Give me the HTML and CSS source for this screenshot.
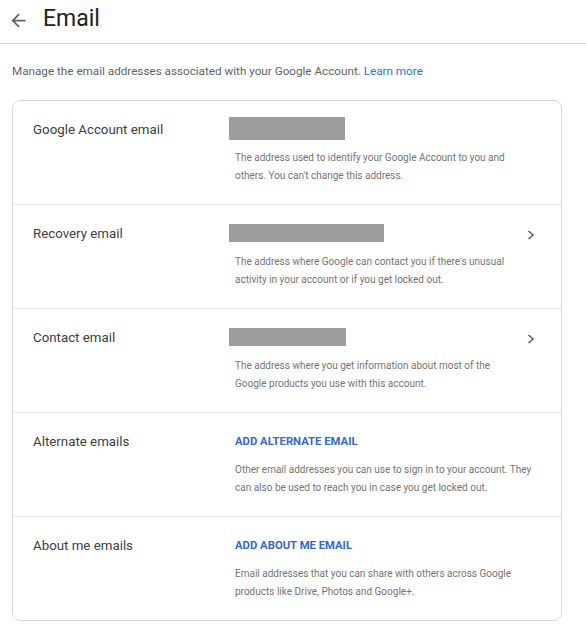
FILE: index.html
```html
<!DOCTYPE html>
<html lang="en">
<head>
<meta charset="utf-8">
<title>Email</title>
<link rel="stylesheet" href="styles.css">
</head>
<body>
<header class="topbar">
  <svg class="back" viewBox="0 0 24 24" width="21" height="21" aria-hidden="true"><path d="M20 11H7.83l5.59-5.59L12 4l-8 8 8 8 1.41-1.41L7.83 13H20v-2z"/></svg>
  <h1 class="title">Email</h1>
</header>
<main class="content">
  <p class="intro">Manage the email addresses associated with your Google Account. <a class="link" href="#">Learn more</a></p>
  <section class="card">
    <div class="row">
      <div class="label">Google Account email</div>
      <div class="line"><span class="redact redact-tall" style="width:116px"></span></div>
      <p class="desc">The address used to identify your Google Account to you and others. You can't change this address.</p>
    </div>
    <div class="row">
      <div class="label">Recovery email</div>
      <div class="line"><span class="redact" style="width:155px"></span></div>
      <div class="action"><svg class="chev" viewBox="0 0 8 10" width="8" height="10" aria-hidden="true"><polyline points="1.5,1 6,5 1.5,9"/></svg></div>
      <p class="desc">The address where Google can contact you if there's unusual activity in your account or if you get locked out.</p>
    </div>
    <div class="row">
      <div class="label">Contact email</div>
      <div class="line"><span class="redact" style="width:117px"></span></div>
      <div class="action"><svg class="chev" viewBox="0 0 8 10" width="8" height="10" aria-hidden="true"><polyline points="1.5,1 6,5 1.5,9"/></svg></div>
      <p class="desc">The address where you get information about most of the<br>Google products you use with this account.</p>
    </div>
    <div class="row">
      <div class="label">Alternate emails</div>
      <div class="line"><a class="add" href="#">ADD ALTERNATE EMAIL</a></div>
      <p class="desc">Other email addresses you can use to sign in to your account. They can also be used to reach you in case you get locked out.</p>
    </div>
    <div class="row">
      <div class="label">About me emails</div>
      <div class="line"><a class="add" href="#">ADD ABOUT ME EMAIL</a></div>
      <p class="desc">Email addresses that you can share with others across Google products like Drive, Photos and Google+.</p>
    </div>
  </section>
</main>
</body>
</html>
```

FILE: styles.css
```css
* { box-sizing: border-box; }
html, body { margin: 0; padding: 0; background: #fff; }
body { font-family: Roboto, "Noto Sans", Arial, sans-serif; color: #3c4043; }

.topbar {
  height: 44px;
  display: flex;
  align-items: center;
  padding-left: 8px;
  border-bottom: 1px solid #dadce0;
}
.back { fill: #5f6368; flex: none; margin-top: -2px; }
.title {
  margin: -6px 0 0 14px;
  font-size: 23px;
  font-weight: 400;
  color: #202124;
  line-height: 30px;
}

.content { padding: 0 0 0 12px; }
.intro {
  margin: 17px 0 19px;
  font-size: 11.7px;
  line-height: 20px;
  color: #5f6368;
}
.link { color: #1a73e8; text-decoration: none; }

.card {
  width: 550px;
  border: 1px solid #dadce0;
  border-radius: 8px;
}
.row {
  display: grid;
  grid-template-columns: 202px 1fr 40px;
  grid-template-rows: 20px auto;
  row-gap: 10px;
  padding: 18px 0 19px 20px;
  border-top: 1px solid #e4e6e8;
}
.row:first-child { border-top: 0; }
.label {
  grid-column: 1;
  grid-row: 1;
  font-size: 13.3px;
  line-height: 21px;
  color: #3c4043;
}
.line {
  grid-column: 2;
  grid-row: 1;
  display: flex;
  align-items: center;
}
.redact {
  display: block;
  height: 18px;
  margin-left: -6px;
  background: #9e9e9e;
}
.redact-tall { height: 23px; margin-top: -2px; }
.add {
  font-size: 11.3px;
  font-weight: 700;
  color: #3367d6;
  text-decoration: none;
}
.action {
  grid-column: 3;
  grid-row: 1;
  padding: 7px 0 0 6px;
}
.chev { display: block; fill: none; stroke: #5f6368; stroke-width: 1.6; }
.desc {
  grid-column: 2 / 4;
  grid-row: 2;
  margin: 0;
  max-width: 300px;
  font-size: 10px;
  line-height: 18px;
  color: #757575;
}
```
